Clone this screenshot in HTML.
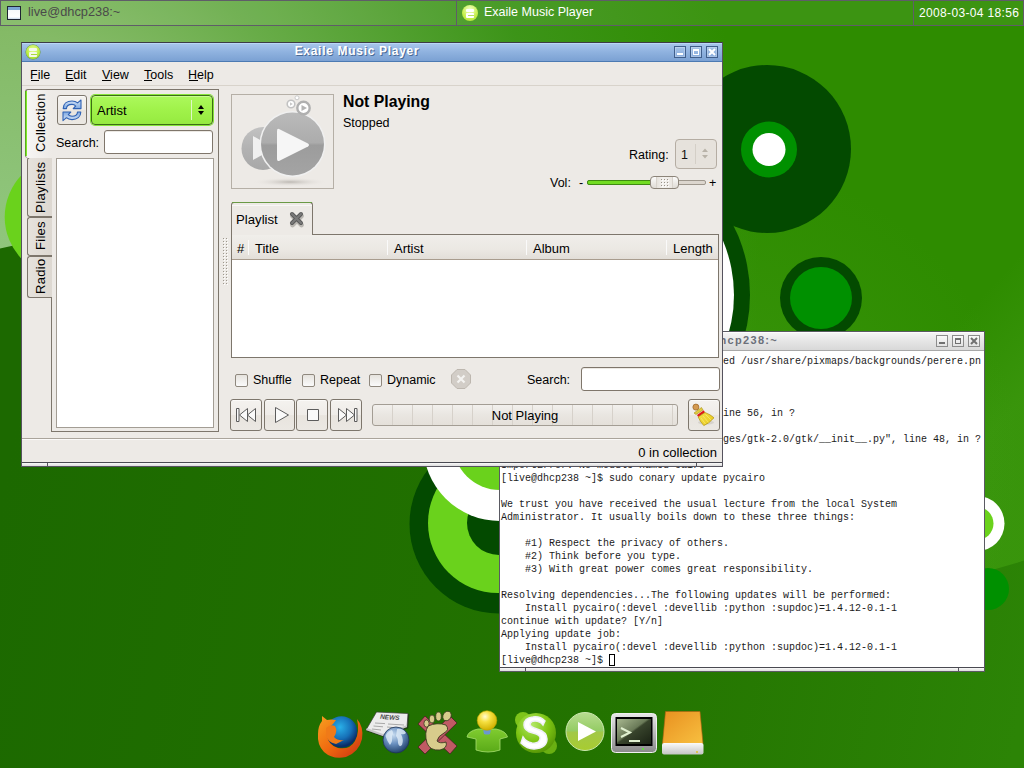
<!DOCTYPE html>
<html><head><meta charset="utf-8">
<style>
*{margin:0;padding:0;box-sizing:border-box}
html,body{width:1024px;height:768px;overflow:hidden;font-family:"Liberation Sans",sans-serif;font-size:13px;color:#000}
.a{position:absolute}
#bg{position:absolute;left:0;top:0}
.t{font-size:12.5px;line-height:14px;white-space:nowrap}
.vt{background:linear-gradient(90deg,#e6e2dc,#ddd8d1);border:1px solid #7d766c;border-right:none;border-radius:3px 0 0 3px}
.vtxt{font-size:12.5px;line-height:14px;white-space:nowrap;transform:rotate(-90deg);transform-origin:0 0}
.btn{border:1px solid #7d766c;border-radius:3px;background:linear-gradient(#f4f2ef,#efece8 50%,#e8e4de 52%,#ebe8e3);box-shadow:inset 0 1px 0 #fbfaf8}
.entry{background:#fff;border:1px solid #7f766b;border-radius:3px;box-shadow:inset 0 1px 0 #ece9e4}
.sep{top:240px;width:1px;height:15px;background:#c8c2b9;border-right:1px solid #fafafa}
.cb{width:13px;height:13px;border:1px solid #8f887e;border-radius:2px;background:linear-gradient(#e6e3de,#fafafa)}
.term{font-family:"Liberation Mono",monospace;font-size:10px;line-height:13px;color:#1a1a1a}
.ttb{width:12px;height:12px;border:1px solid #8c8c8c;background:linear-gradient(#fafafa,#e2e2e2)}
.tb{width:12px;height:12px;border:1px solid #405f8c;background:linear-gradient(#a4c2e8,#88acdc);box-shadow:inset 0 0 0 1px rgba(255,255,255,0.25)}

</style></head><body>
<svg id="bg" width="1024" height="768" viewBox="0 0 1024 768">
<defs>
<radialGradient id="g1" gradientUnits="userSpaceOnUse" cx="0" cy="260" r="760">
<stop offset="0" stop-color="#90c67c"/>
<stop offset="0.08" stop-color="#8ec47a"/>
<stop offset="0.3" stop-color="#84ba66"/>
<stop offset="0.45" stop-color="#68ac48"/>
<stop offset="0.74" stop-color="#3c9418"/>
<stop offset="1" stop-color="#2e8c00"/>
</radialGradient>
<linearGradient id="g2" gradientUnits="userSpaceOnUse" x1="0" y1="500" x2="1024" y2="700">
<stop offset="0" stop-color="#1c6900"/>
<stop offset="0.6" stop-color="#237300"/>
<stop offset="1" stop-color="#2c8406"/>
</linearGradient>
<linearGradient id="band" gradientUnits="userSpaceOnUse" x1="812" y1="475" x2="885" y2="544">
<stop offset="0" stop-color="#5ab030" stop-opacity="0"/>
<stop offset="1" stop-color="#5ab030" stop-opacity="0.24"/>
</linearGradient>
<radialGradient id="glow" cx="0.5" cy="0.5" r="0.5">
<stop offset="0" stop-color="#5ab030" stop-opacity="0.25"/>
<stop offset="0.6" stop-color="#5ab030" stop-opacity="0.1"/>
<stop offset="1" stop-color="#5ab030" stop-opacity="0"/>
</radialGradient>
</defs>
<rect width="1024" height="768" fill="url(#g1)"/>
<path d="M1024 150 L1024 561 Q900 600 700 680 L500 700Z" fill="url(#band)"/>
<circle cx="720" cy="460" r="300" fill="url(#glow)"/>
<path d="M0 248.5 Q150 215 400 250 Q760 320 930 578 Q980 576 1024 560.5 L1024 768 L0 768Z" fill="url(#g2)"/>
<!-- left bright circle -->
<circle cx="65" cy="217" r="60.3" fill="#6ad21c"/>
<!-- big white ring circle behind exaile -->
<circle cx="595" cy="295" r="155" fill="#034a00"/>
<circle cx="595" cy="295" r="139" fill="#fff"/>
<!-- big dark circle top right -->
<circle cx="767" cy="149" r="84" fill="#034a00"/>
<circle cx="769" cy="149.5" r="28" fill="#009000"/>
<circle cx="769" cy="149.5" r="16.5" fill="#fff"/>
<!-- circle 2 -->
<circle cx="821" cy="298" r="41" fill="#034a00"/>
<circle cx="821" cy="298" r="31" fill="#009000"/>
<!-- lower concentric -->
<circle cx="499" cy="524" r="89.5" fill="#034a00"/>
<circle cx="498" cy="523" r="70" fill="#6ad21c"/>
<circle cx="499" cy="523" r="32" fill="#034a00"/>
<circle cx="500" cy="444" r="77" fill="#fff"/>
<circle cx="500" cy="443" r="47" fill="#6ad21c"/>
<!-- right ring -->
<circle cx="977" cy="523.5" r="27.5" fill="#fff"/>
<circle cx="977" cy="523.5" r="16.5" fill="#6ad21c"/>
<circle cx="988" cy="589" r="21" fill="#009000"/>
</svg>

<!-- top panel -->
<div class="a" style="left:0;top:0;width:1024px;height:26px;background:rgba(255,255,255,0.07);border:1px solid #5f5d68"></div>
<div class="a" style="left:456px;top:0;width:1px;height:26px;background:#5f5d68"></div>
<div class="a" style="left:913px;top:0;width:1px;height:26px;background:#5f5d68"></div>
<div class="a" style="left:7px;top:6px;width:14px;height:14px;border:1px solid #1e2432;background:linear-gradient(#7aa6d4 0,#7aa6d4 3px,#f6f8fa 3px,#fff 10px,#c8d8ea 12px)"></div>
<div class="a" style="left:28px;top:5px;font-size:12.8px;line-height:14px;color:#4a4a4a;white-space:nowrap">live@dhcp238:~</div>
<div class="a" style="left:462px;top:5px;width:16px;height:16px;border-radius:50%;background:radial-gradient(circle at 50% 30%,#f4ffd0,#c8f050 55%,#a8dc30)"></div>
<div class="a" style="left:466px;top:9px;width:8px;height:3px;background:#fff;border-radius:1px"></div>
<div class="a" style="left:466px;top:13px;width:8px;height:5px;background:#fff;border-radius:1px"></div>
<div class="a" style="left:468px;top:15px;width:6px;height:1px;background:#b8e060"></div>
<div class="a" style="left:484px;top:5px;font-size:12.5px;line-height:14px;color:#fff;white-space:nowrap">Exaile Music Player</div>
<div class="a" style="left:919px;top:6px;font-size:12px;line-height:14px;color:#fff;white-space:nowrap;letter-spacing:0.35px">2008-03-04 18:56</div>

<!-- terminal window -->
<div class="a" style="left:499px;top:331px;width:486px;height:341px;background:#fff;border:1px solid #5a5a62"></div>
<div class="a" style="left:500px;top:332px;width:484px;height:18px;background:linear-gradient(#f6f6f6,#e6e6e6 50%,#d8d8d8)"></div>
<div class="a" style="left:500px;top:350px;width:484px;height:1px;background:#a8a8a8"></div>
<div class="a" style="left:500px;top:332px;width:484px;height:1px;background:#fdfdfd"></div>
<div class="a" style="left:676px;top:333px;font-weight:bold;font-size:11px;letter-spacing:1.3px;line-height:14px;color:#6c707a;white-space:nowrap">live@dhcp238:~</div>
<div class="a ttb" style="left:936px;top:335px"><div style="position:absolute;left:2px;top:6px;width:6px;height:2px;background:#707070"></div></div>
<div class="a ttb" style="left:952px;top:335px"><div style="position:absolute;left:2px;top:2px;width:6px;height:6px;border:1px solid #707070;border-top-width:2px"></div></div>
<div class="a ttb" style="left:968px;top:335px"><svg width="10" height="10" style="position:absolute;left:0;top:0"><path d="M2 2L8 8M8 2L2 8" stroke="#707070" stroke-width="2"/></svg></div>
<pre class="a term" style="left:501px;top:355px">                                     ed /usr/share/pixmaps/backgrounds/perere.pn
g

Traceback (most recent call last):
  File "/usr/lib/exaile/exaile.py", line 56, in ?
    import gtk, gobject
  File "/usr/lib/python2.4/site-packages/gtk-2.0/gtk/__init__.py", line 48, in ?
    from gtk import _gtk
ImportError: No module named cairo
[live@dhcp238 ~]$ sudo conary update pycairo

We trust you have received the usual lecture from the local System
Administrator. It usually boils down to these three things:

    #1) Respect the privacy of others.
    #2) Think before you type.
    #3) With great power comes great responsibility.

Resolving dependencies...The following updates will be performed:
    Install pycairo(:devel :devellib :python :supdoc)=1.4.12-0.1-1
continue with update? [Y/n]
Applying update job:
    Install pycairo(:devel :devellib :python :supdoc)=1.4.12-0.1-1
[live@dhcp238 ~]$ <span style="display:inline-block;width:6px;height:12px;border:1px solid #000;vertical-align:-3px"></span></pre>
<div class="a" style="left:500px;top:667px;width:484px;height:1px;background:#4a4a52"></div>
<div class="a" style="left:500px;top:668px;width:484px;height:3px;background:linear-gradient(#fafafa,#dcdcdc)"></div>
<div class="a" style="left:525px;top:668px;width:1px;height:3px;background:#55555c"></div>
<div class="a" style="left:958px;top:668px;width:1px;height:3px;background:#55555c"></div>

<!-- exaile window -->
<div class="a" style="left:21px;top:42px;width:702px;height:425px;background:#edeae6;border:1px solid #55535e;border-top-color:#3c3c46"></div>
<!-- title bar -->
<div class="a" style="left:22px;top:43px;width:700px;height:18px;background:linear-gradient(#a9c7ec,#8fb2df 50%,#7ba1d3)"></div>
<div class="a" style="left:22px;top:43px;width:700px;height:1px;background:#b9d6f6"></div>
<div class="a" style="left:22px;top:61px;width:700px;height:1px;background:#4c7ab2"></div>
<div class="a t" style="left:22px;top:44px;width:670px;text-align:center;font-weight:bold;font-size:12px;letter-spacing:0.7px;line-height:15px;color:#fff;text-shadow:1px 1px 0 #4a6a96">Exaile Music Player</div>


<!-- title icon -->
<div class="a" style="left:26px;top:45px;width:14px;height:14px;border-radius:50%;background:radial-gradient(circle at 50% 35%,#e8ff9a,#b8ec3a 60%,#8cc820);box-shadow:0 0 0 0.5px #6a9a20"></div>
<div class="a" style="left:29px;top:48px;width:8px;height:3px;background:#f4f8ea;border-radius:1px"></div>
<div class="a" style="left:29px;top:52px;width:8px;height:5px;background:#f4f8ea;border-radius:1px"></div>
<div class="a" style="left:31px;top:54px;width:6px;height:1px;background:#a8d840"></div>
<!-- title buttons -->
<div class="a tb" style="left:674px;top:46px"><div style="position:absolute;left:2px;top:6px;width:6px;height:2px;background:#fff"></div></div>
<div class="a tb" style="left:690px;top:46px"><div style="position:absolute;left:2px;top:2px;width:6px;height:6px;border:1px solid #fff;border-top-width:2px"></div></div>
<div class="a tb" style="left:706px;top:46px"><svg width="10" height="10" style="position:absolute;left:0;top:0"><path d="M2 2L8 8M8 2L2 8" stroke="#fff" stroke-width="2"/></svg></div>
<!-- menu bar -->
<div class="a" style="left:22px;top:85px;width:700px;height:1px;background:#d8d3cb"></div>
<div class="a t" style="left:30px;top:68px">File</div>
<div class="a t" style="left:65px;top:68px">Edit</div>
<div class="a t" style="left:102px;top:68px">View</div>
<div class="a t" style="left:144px;top:68px">Tools</div>
<div class="a t" style="left:188px;top:68px">Help</div>
<div class="a" style="left:31px;top:80px;width:8px;height:1px;background:#000"></div>
<div class="a" style="left:66px;top:80px;width:8px;height:1px;background:#000"></div>
<div class="a" style="left:102px;top:80px;width:9px;height:1px;background:#000"></div>
<div class="a" style="left:144px;top:80px;width:8px;height:1px;background:#000"></div>
<div class="a" style="left:189px;top:80px;width:9px;height:1px;background:#000"></div>

<!-- left notebook -->
<div class="a" style="left:51px;top:89px;width:168px;height:343px;border:1px solid #7d766c;background:#edeae6"></div>
<!-- inactive tabs -->
<div class="a vt" style="left:27px;top:157px;width:25px;height:60px"></div>
<div class="a vt" style="left:27px;top:217px;width:25px;height:39px"></div>
<div class="a vt" style="left:27px;top:256px;width:25px;height:42px"></div>
<!-- active tab -->
<div class="a" style="left:25px;top:89px;width:27px;height:69px;background:linear-gradient(90deg,#f7f6f4,#edeae6);border:1px solid #7d766c;border-right:none;border-bottom:none;border-radius:3px 0 0 3px"></div>
<div class="a" style="left:25px;top:91px;width:1px;height:65px;background:#58a820"></div><div class="a" style="left:26px;top:91px;width:1px;height:65px;background:#7ee828"></div>
<div class="a vtxt" style="left:33.5px;top:152px;width:70px;font-size:12.9px;letter-spacing:0.2px">Collection</div>
<div class="a vtxt" style="left:33.5px;top:213px;width:60px;font-size:13.2px;letter-spacing:0.35px">Playlists</div>
<div class="a vtxt" style="left:33.5px;top:250px;width:40px;font-size:13.2px;letter-spacing:0.2px">Files</div>
<div class="a vtxt" style="left:33.5px;top:294px;width:42px;font-size:13px;letter-spacing:0.3px">Radio</div>
<!-- refresh button -->
<div class="a btn" style="left:57px;top:95px;width:30px;height:30px"></div>
<svg class="a" style="left:57px;top:95px" width="30" height="30" viewBox="0 0 30 30">
<defs><linearGradient id="rf" x1="0" y1="0" x2="0" y2="1"><stop offset="0" stop-color="#d8e6f8"/><stop offset="1" stop-color="#7ea8e0"/></linearGradient></defs>
<g fill="url(#rf)" stroke="#2f62b4" stroke-width="1.1" stroke-linejoin="round">
<path d="M6.2 13.6 C6.2 8.6 10 6 15 6 C17.6 6 19.4 6.8 20.6 7.9 L24 5 L24 13.6 L16.2 13.6 L18.7 11 C17.8 10 16.6 9.4 15 9.4 C11.5 9.4 9.5 11.2 9.5 13.6 Z"/>
<path d="M6.2 13.6 C6.2 8.6 10 6 15 6 C17.6 6 19.4 6.8 20.6 7.9 L24 5 L24 13.6 L16.2 13.6 L18.7 11 C17.8 10 16.6 9.4 15 9.4 C11.5 9.4 9.5 11.2 9.5 13.6 Z" transform="rotate(180 15 15.3)"/>
</g>
</svg>
<!-- artist combo -->
<div class="a" style="left:91px;top:95px;width:122px;height:30px;border:1px solid #3c6e14;border-radius:4px;background:linear-gradient(#acf85c,#a0f24a 50%,#96ea40);box-shadow:inset 0 1px 0 #c8fc90,0 0 0 1px #86e43a"></div>
<div class="a t" style="left:97px;top:104px;font-size:13px">Artist</div>
<div class="a" style="left:191px;top:100px;width:1px;height:20px;background:#dff8c6"></div>
<svg class="a" style="left:197px;top:104px" width="8" height="12"><path d="M1 5L4 1L7 5Z M1 7L4 11L7 7Z" fill="#000"/></svg>
<!-- search -->
<div class="a t" style="left:56px;top:136px">Search:</div>
<div class="a entry" style="left:104px;top:130px;width:109px;height:24px"></div>
<!-- tree -->
<div class="a" style="left:56px;top:158px;width:158px;height:270px;background:#fff;border:1px solid #a39d94"></div>

<!-- album art -->
<div class="a" style="left:231px;top:94px;width:103px;height:95px;border:1px solid #b5afa6;background:#edeae6"></div>
<svg class="a" style="left:232px;top:95px" width="101" height="93" viewBox="0 0 101 93">
<defs>
<radialGradient id="sh" cx="0.5" cy="0.5" r="0.5"><stop offset="0" stop-color="#bdb9b3"/><stop offset="1" stop-color="#edeae6" stop-opacity="0"/></radialGradient>
<linearGradient id="gb" x1="0" y1="0" x2="0" y2="1"><stop offset="0" stop-color="#bababa"/><stop offset="0.48" stop-color="#acacac"/><stop offset="0.52" stop-color="#9c9c9c"/><stop offset="1" stop-color="#a4a4a4"/></linearGradient>
<linearGradient id="gs" x1="0" y1="0" x2="0" y2="1"><stop offset="0" stop-color="#c2c2c2"/><stop offset="0.5" stop-color="#b2b2b2"/><stop offset="1" stop-color="#a8a8a8"/></linearGradient>
</defs>
<ellipse cx="58" cy="87" rx="38" ry="4.5" fill="url(#sh)"/>
<circle cx="31" cy="53.5" r="21.5" fill="url(#gs)"/>
<path d="M21 41 L21 65 L30 60 L30 46Z" fill="#f0f0f0"/>
<circle cx="60.5" cy="49" r="33" fill="#f0f0f0"/>
<circle cx="60.5" cy="49" r="31.5" fill="url(#gb)"/>
<path d="M47 34 Q45 33 45 36 L45 64 Q45 67 48 65.5 L76 51.5 Q78 50 76 48.5Z" fill="#f6f6f6"/>
<circle cx="71.5" cy="13" r="6.2" fill="#fff" stroke="#b0b0b0" stroke-width="2.4"/>
<path d="M69.5 10 L69.5 16 L75 13Z" fill="#b4b4b4"/>
<circle cx="59" cy="9" r="3.8" fill="#fff" stroke="#c2c2c2" stroke-width="1.6"/>
<path d="M58 7.3 L58 10.7 L60.8 9Z" fill="#c8c8c8"/>
<circle cx="65" cy="2.8" r="2" fill="#fff" stroke="#cacaca" stroke-width="1"/>
</svg>
<div class="a" style="left:343px;top:93px;font-weight:bold;font-size:15.8px;line-height:18px;white-space:nowrap">Not Playing</div>
<div class="a t" style="left:343px;top:116px">Stopped</div>
<!-- rating -->
<div class="a t" style="left:629px;top:148px">Rating:</div>
<div class="a" style="left:675px;top:139px;width:42px;height:30px;border:1px solid #b5ada3;border-radius:4px;background:#e6e2dc"></div>
<div class="a t" style="left:681px;top:148px;color:#111">1</div>
<div class="a" style="left:695px;top:144px;width:1px;height:20px;background:#d4cfc7"></div>
<svg class="a" style="left:701px;top:147px" width="8" height="14"><path d="M1 5L4 1.5L7 5Z M1 8L4 11.5L7 8Z" fill="#b8b2a8"/></svg>
<!-- volume -->
<div class="a t" style="left:550px;top:176px">Vol:</div>
<div class="a t" style="left:579px;top:176px">-</div>
<div class="a t" style="left:709px;top:176px">+</div>
<div class="a" style="left:587px;top:180px;width:119px;height:5px;border:1px solid #9e978d;border-radius:2px;background:#dcd6ce"></div>
<div class="a" style="left:587px;top:180px;width:65px;height:5px;border:1px solid #3f8a12;border-radius:2px 0 0 2px;background:#72dc22"></div>
<div class="a" style="left:650px;top:176px;width:29px;height:13px;border:1px solid #8c8479;border-radius:4px;background:linear-gradient(#fcfcfb,#ebe8e4 60%,#e0dcd6)"></div>
<div class="a" style="left:656px;top:177px;width:17px;height:11px;border-left:1px solid #d8d3cc;border-right:1px solid #d8d3cc;background:linear-gradient(90deg,#e6e2dc,#f4f2ef 40%,#ebe7e2)"></div><svg class="a" style="left:661px;top:179px" width="8" height="8"><rect x="0" y="0" width="1" height="1" fill="#9a938a"/><rect x="1" y="1" width="1" height="1" fill="#fff"/><rect x="3" y="0" width="1" height="1" fill="#9a938a"/><rect x="4" y="1" width="1" height="1" fill="#fff"/><rect x="6" y="0" width="1" height="1" fill="#9a938a"/><rect x="7" y="1" width="1" height="1" fill="#fff"/><rect x="0" y="3" width="1" height="1" fill="#9a938a"/><rect x="1" y="4" width="1" height="1" fill="#fff"/><rect x="3" y="3" width="1" height="1" fill="#9a938a"/><rect x="4" y="4" width="1" height="1" fill="#fff"/><rect x="6" y="3" width="1" height="1" fill="#9a938a"/><rect x="7" y="4" width="1" height="1" fill="#fff"/><rect x="0" y="6" width="1" height="1" fill="#9a938a"/><rect x="1" y="7" width="1" height="1" fill="#fff"/><rect x="3" y="6" width="1" height="1" fill="#9a938a"/><rect x="4" y="7" width="1" height="1" fill="#fff"/><rect x="6" y="6" width="1" height="1" fill="#9a938a"/><rect x="7" y="7" width="1" height="1" fill="#fff"/></svg>

<!-- pane handle -->
<svg class="a" style="left:223px;top:238px" width="6" height="48"><rect x="0" y="0" width="1" height="1" fill="#9d978d"/><rect x="1" y="1" width="1" height="1" fill="#fff"/><rect x="3" y="0" width="1" height="1" fill="#9d978d"/><rect x="4" y="1" width="1" height="1" fill="#fff"/><rect x="0" y="3" width="1" height="1" fill="#9d978d"/><rect x="1" y="4" width="1" height="1" fill="#fff"/><rect x="3" y="3" width="1" height="1" fill="#9d978d"/><rect x="4" y="4" width="1" height="1" fill="#fff"/><rect x="0" y="6" width="1" height="1" fill="#9d978d"/><rect x="1" y="7" width="1" height="1" fill="#fff"/><rect x="3" y="6" width="1" height="1" fill="#9d978d"/><rect x="4" y="7" width="1" height="1" fill="#fff"/><rect x="0" y="9" width="1" height="1" fill="#9d978d"/><rect x="1" y="10" width="1" height="1" fill="#fff"/><rect x="3" y="9" width="1" height="1" fill="#9d978d"/><rect x="4" y="10" width="1" height="1" fill="#fff"/><rect x="0" y="12" width="1" height="1" fill="#9d978d"/><rect x="1" y="13" width="1" height="1" fill="#fff"/><rect x="3" y="12" width="1" height="1" fill="#9d978d"/><rect x="4" y="13" width="1" height="1" fill="#fff"/><rect x="0" y="15" width="1" height="1" fill="#9d978d"/><rect x="1" y="16" width="1" height="1" fill="#fff"/><rect x="3" y="15" width="1" height="1" fill="#9d978d"/><rect x="4" y="16" width="1" height="1" fill="#fff"/><rect x="0" y="18" width="1" height="1" fill="#9d978d"/><rect x="1" y="19" width="1" height="1" fill="#fff"/><rect x="3" y="18" width="1" height="1" fill="#9d978d"/><rect x="4" y="19" width="1" height="1" fill="#fff"/><rect x="0" y="21" width="1" height="1" fill="#9d978d"/><rect x="1" y="22" width="1" height="1" fill="#fff"/><rect x="3" y="21" width="1" height="1" fill="#9d978d"/><rect x="4" y="22" width="1" height="1" fill="#fff"/><rect x="0" y="24" width="1" height="1" fill="#9d978d"/><rect x="1" y="25" width="1" height="1" fill="#fff"/><rect x="3" y="24" width="1" height="1" fill="#9d978d"/><rect x="4" y="25" width="1" height="1" fill="#fff"/><rect x="0" y="27" width="1" height="1" fill="#9d978d"/><rect x="1" y="28" width="1" height="1" fill="#fff"/><rect x="3" y="27" width="1" height="1" fill="#9d978d"/><rect x="4" y="28" width="1" height="1" fill="#fff"/><rect x="0" y="30" width="1" height="1" fill="#9d978d"/><rect x="1" y="31" width="1" height="1" fill="#fff"/><rect x="3" y="30" width="1" height="1" fill="#9d978d"/><rect x="4" y="31" width="1" height="1" fill="#fff"/><rect x="0" y="33" width="1" height="1" fill="#9d978d"/><rect x="1" y="34" width="1" height="1" fill="#fff"/><rect x="3" y="33" width="1" height="1" fill="#9d978d"/><rect x="4" y="34" width="1" height="1" fill="#fff"/><rect x="0" y="36" width="1" height="1" fill="#9d978d"/><rect x="1" y="37" width="1" height="1" fill="#fff"/><rect x="3" y="36" width="1" height="1" fill="#9d978d"/><rect x="4" y="37" width="1" height="1" fill="#fff"/><rect x="0" y="39" width="1" height="1" fill="#9d978d"/><rect x="1" y="40" width="1" height="1" fill="#fff"/><rect x="3" y="39" width="1" height="1" fill="#9d978d"/><rect x="4" y="40" width="1" height="1" fill="#fff"/><rect x="0" y="42" width="1" height="1" fill="#9d978d"/><rect x="1" y="43" width="1" height="1" fill="#fff"/><rect x="3" y="42" width="1" height="1" fill="#9d978d"/><rect x="4" y="43" width="1" height="1" fill="#fff"/><rect x="0" y="45" width="1" height="1" fill="#9d978d"/><rect x="1" y="46" width="1" height="1" fill="#fff"/><rect x="3" y="45" width="1" height="1" fill="#9d978d"/><rect x="4" y="46" width="1" height="1" fill="#fff"/></svg>
<!-- playlist notebook -->
<div class="a" style="left:231px;top:234px;width:488px;height:124px;border:1px solid #7d766c"></div>
<div class="a" style="left:231px;top:202px;width:82px;height:33px;border:1px solid #7d766c;border-bottom:none;border-radius:3px 3px 0 0;background:#edeae6"></div>
<div class="a" style="left:232px;top:202px;width:80px;height:1px;background:#6a9a46"></div>
<div class="a" style="left:232px;top:205px;width:80px;height:1px;background:#f8f7f5"></div>
<div class="a t" style="left:236px;top:213px;font-size:13.2px">Playlist</div>
<svg class="a" style="left:288px;top:210px" width="18" height="18" viewBox="0 0 18 18">
<path d="M4 5L13 14M13 5L4 14" stroke="#b9b6b1" stroke-width="4.6" stroke-linecap="round" transform="translate(0.5,1)"/>
<path d="M4 4L13 13M13 4L4 13" stroke="#5a5a5a" stroke-width="4" stroke-linecap="round"/>
<path d="M4 4L13 13M13 4L4 13" stroke="#7a7a7a" stroke-width="2" stroke-linecap="round"/>
</svg>
<!-- column headers -->
<div class="a" style="left:232px;top:235px;width:486px;height:24px;background:linear-gradient(#f0eeea,#ebe8e3 60%,#e2ded8)"></div>
<div class="a" style="left:232px;top:259px;width:486px;height:1px;background:#a89c8e"></div>
<div class="a sep" style="left:248px"></div>
<div class="a sep" style="left:387px"></div>
<div class="a sep" style="left:526px"></div>
<div class="a sep" style="left:666px"></div>
<div class="a t" style="left:237px;top:242px;font-size:13px">#</div>
<div class="a t" style="left:255px;top:242px;font-size:13px">Title</div>
<div class="a t" style="left:394px;top:242px;font-size:13px">Artist</div>
<div class="a t" style="left:533px;top:242px;font-size:13px">Album</div>
<div class="a t" style="left:673px;top:242px;font-size:13px">Length</div>
<div class="a" style="left:232px;top:260px;width:486px;height:97px;background:#fff"></div>
<!-- checkboxes -->
<div class="a cb" style="left:235px;top:374px"></div>
<div class="a t" style="left:253px;top:373px">Shuffle</div>
<div class="a cb" style="left:302px;top:374px"></div>
<div class="a t" style="left:320px;top:373px">Repeat</div>
<div class="a cb" style="left:369px;top:374px"></div>
<div class="a t" style="left:387px;top:373px">Dynamic</div>
<svg class="a" style="left:450px;top:368px" width="22" height="22" viewBox="0 0 22 22">
<path d="M7 1.5H15L20.5 7V15L15 20.5H7L1.5 15V7Z" fill="#d2cdc7" stroke="#bdb7af" stroke-width="1"/>
<path d="M7.5 7.5L14.5 14.5M14.5 7.5L7.5 14.5" stroke="#f4f3f1" stroke-width="2.2"/>
</svg>
<div class="a t" style="left:527px;top:373px">Search:</div>
<div class="a entry" style="left:581px;top:367px;width:139px;height:24px"></div>
<!-- transport buttons -->
<div class="a btn" style="left:230px;top:399px;width:32px;height:32px"></div>
<div class="a btn" style="left:264px;top:399px;width:31px;height:32px"></div>
<div class="a btn" style="left:296px;top:399px;width:32px;height:32px"></div>
<div class="a btn" style="left:330px;top:399px;width:32px;height:32px"></div>
<svg class="a" style="left:230px;top:399px" width="132" height="32" viewBox="0 0 132 32">
<g fill="#fafafa" stroke="#5c5c5c" stroke-width="1" stroke-linejoin="round">
<rect x="6.5" y="9.5" width="2.5" height="13"/>
<path d="M17.5 9.5L9.5 16L17.5 22.5Z"/>
<path d="M25.5 9.5L17.5 16L25.5 22.5Z"/>
<path d="M45.5 8.5L45.5 23.5L58.5 16Z"/>
<rect x="77.5" y="10.5" width="11" height="11"/>
<path d="M108.5 9.5L116.5 16L108.5 22.5Z"/>
<path d="M116.5 9.5L124.5 16L116.5 22.5Z"/>
<rect x="124.5" y="9.5" width="2.5" height="13"/>
</g>
</svg>
<!-- progress -->
<div class="a" style="left:372px;top:404px;width:306px;height:22px;border:1px solid #a39d94;border-radius:3px;background:linear-gradient(#f2f0ed,#e9e6e1 50%,#e4e0da)"></div>
<div class="a" style="left:373px;top:405px;width:304px;height:20px;background-image:linear-gradient(90deg,transparent 19px,#d6d1ca 19px,#d6d1ca 20px);background-size:20px 20px;background-position:0 0"></div>
<div class="a t" style="left:373px;top:409px;width:304px;text-align:center;font-size:13px">Not Playing</div>
<!-- broom -->
<div class="a btn" style="left:688px;top:399px;width:32px;height:32px"></div>
<svg class="a" style="left:686px;top:397px" width="36" height="36" viewBox="0 0 36 36">
<defs><linearGradient id="brs" x1="0" y1="0" x2="1" y2="1"><stop offset="0" stop-color="#f4e04a"/><stop offset="1" stop-color="#e8c818"/></linearGradient></defs>
<ellipse cx="20" cy="25.5" rx="8" ry="2.2" fill="#c8c4be" opacity="0.6"/>
<circle cx="9.9" cy="10.1" r="3" fill="#d49a50" stroke="#a06a28" stroke-width="0.8"/>
<path d="M8 16 L15.5 10.5 L17 13 L10 17.5Z" fill="#e0cc40" stroke="#a89018" stroke-width="0.6"/>
<path d="M11 18 L17.8 13.2 L19 15.5 L12.2 20Z" fill="#e01818"/>
<path d="M12.2 20 L19 15.5 Q24.5 17.5 28 20.8 Q23 26.5 17.8 28.6 Q14 24.5 12.2 20Z" fill="url(#brs)" stroke="#b09010" stroke-width="0.7"/>
<path d="M15 21 L19.5 27 M17 19 L22.5 25.5 M19.5 17.5 L25 23" stroke="#fff6a0" stroke-width="0.6" opacity="0.8"/>
</svg>
<!-- statusbar -->
<div class="a" style="left:22px;top:438px;width:700px;height:1px;background:#aaa49b"></div>
<div class="a" style="left:22px;top:439px;width:700px;height:1px;background:#fbfaf9"></div>
<div class="a t" style="left:600px;top:446px;width:117px;text-align:right;font-size:13px">0 in collection</div>
<div class="a" style="left:22px;top:462px;width:700px;height:1px;background:#4a4a52"></div>
<div class="a" style="left:22px;top:463px;width:700px;height:3px;background:linear-gradient(#fafafa,#dcdcdc)"></div>
<div class="a" style="left:47px;top:463px;width:1px;height:3px;background:#55555c"></div>
<div class="a" style="left:696px;top:463px;width:1px;height:3px;background:#55555c"></div>

<!-- dock -->
<svg class="a" style="left:300px;top:700px" width="420" height="68" viewBox="300 700 420 68">
<defs>
<radialGradient id="ffg" cx="0.45" cy="0.35" r="0.6"><stop offset="0" stop-color="#2ab0e8"/><stop offset="0.6" stop-color="#1670b8"/><stop offset="1" stop-color="#0a2e68"/></radialGradient>
<linearGradient id="ffo" x1="0" y1="0" x2="1" y2="1"><stop offset="0" stop-color="#f8a020"/><stop offset="0.5" stop-color="#f06a10"/><stop offset="1" stop-color="#c83010"/></linearGradient>
<radialGradient id="glb" cx="0.4" cy="0.3" r="0.7"><stop offset="0" stop-color="#c8dcf0"/><stop offset="0.5" stop-color="#6a90c0"/><stop offset="1" stop-color="#24446e"/></radialGradient>
<radialGradient id="yel" cx="0.4" cy="0.3" r="0.7"><stop offset="0" stop-color="#fffbd0"/><stop offset="0.4" stop-color="#f6e040"/><stop offset="1" stop-color="#d0b000"/></radialGradient>
<linearGradient id="shirt" x1="0" y1="0" x2="0" y2="1"><stop offset="0" stop-color="#80cc30"/><stop offset="1" stop-color="#5aaa18"/></linearGradient>
<radialGradient id="sky" cx="0.4" cy="0.3" r="0.7"><stop offset="0" stop-color="#b4e868"/><stop offset="0.6" stop-color="#7cc412"/><stop offset="1" stop-color="#5a9a08"/></radialGradient>
<linearGradient id="exg" x1="0" y1="0" x2="0" y2="1"><stop offset="0" stop-color="#b8dc90"/><stop offset="0.48" stop-color="#94cc64"/><stop offset="0.52" stop-color="#a2c848"/><stop offset="1" stop-color="#a8cc30"/></linearGradient>
<linearGradient id="mon" x1="0" y1="0" x2="0" y2="1"><stop offset="0" stop-color="#e8e8e8"/><stop offset="1" stop-color="#8a8a8a"/></linearGradient>
<linearGradient id="scr" x1="0" y1="0" x2="1" y2="1"><stop offset="0" stop-color="#a8b890"/><stop offset="0.45" stop-color="#6a7a58"/><stop offset="0.5" stop-color="#38442c"/><stop offset="1" stop-color="#1a2214"/></linearGradient>
<linearGradient id="drv" x1="0" y1="0" x2="1" y2="1"><stop offset="0" stop-color="#e89020"/><stop offset="1" stop-color="#f8c040"/></linearGradient>
<linearGradient id="drb" x1="0" y1="0" x2="0" y2="1"><stop offset="0" stop-color="#fafafa"/><stop offset="1" stop-color="#c4c4c4"/></linearGradient>
</defs>
<!-- firefox -->
<circle cx="341.5" cy="732" r="15.8" fill="url(#ffg)"/>
<path d="M357 719 Q364 727 362 739 Q359 752 346 757 Q333 760 324 752 Q317 745 318 734 Q318 726 322 721 L322 716 L327 720 Q331 719 336 720 L333 724 Q327 728 327 735 Q328 745 338 748 Q350 750 355 741 Q360 732 357 719Z" fill="url(#ffo)"/>
<path d="M326 728 Q330 724 335 726 Q338 731 334 737 Q338 741 344 740 L336 744 Q327 742 326 735Z" fill="#f07a18"/>
<!-- news -->
<path d="M366 730.5 L376 712 L408.5 713.5 L407.5 727.5 L383.5 736.5Z" fill="#1a1a1a" opacity="0.5" transform="translate(0.8,0.8)"/>
<path d="M366 730 L376.5 712 L408 713.5 L407 727 L383 736Z" fill="#ececec" stroke="#3a3a3a" stroke-width="0.7"/>
<path d="M366 730 L383 736 L407 727 L407 725 L383 734 L367 728Z" fill="#c8c8c8"/>
<text x="380" y="719.5" font-family="Liberation Sans" font-weight="bold" font-style="italic" font-size="6.5" fill="#4a4a4a" transform="rotate(4 390 718)">NEWS</text>
<path d="M375 723 L385 723.6 M373.5 726 L383 726.8 M372 729 L381 730 M388 724 L404 725 M387 727 L398 728" stroke="#a0a0a0" stroke-width="0.9"/>
<circle cx="396" cy="740" r="13" fill="url(#glb)" stroke="#1e3454" stroke-width="0.8"/>
<path d="M385.5 736 Q387 731 392 730 Q394 733 392 736 Q393 741 390 745 Q387 741 385.5 736Z M397 729 Q403 728 406 733 Q404 735 401 734 Q404 740 402 745 Q399 748 398 743 Q398 738 396 736Z" fill="#e0ecf8" opacity="0.8"/>
<!-- gimp -->
<path d="M418 724 L425 716 L457 746 L450 754Z" fill="#c05a64" stroke="#4a2024" stroke-width="0.8"/>
<path d="M418 747 L450 716 L457 723 L425 754Z" fill="#c05a64" stroke="#4a2024" stroke-width="0.8"/>
<path d="M428 726 Q437 722 446 725 Q450 730 444 733 Q438 736 437 741 Q440 744 446 742 Q448 748 440 750 Q430 751 427 743 Q424 733 428 726Z" fill="#d8cc8c" stroke="#3a3a20" stroke-width="0.9"/>
<ellipse cx="426.5" cy="723.5" rx="2.6" ry="3.6" fill="#d8cc8c" stroke="#3a3a20" stroke-width="0.8"/>
<ellipse cx="432" cy="719" rx="2.8" ry="4" fill="#d8cc8c" stroke="#3a3a20" stroke-width="0.8"/>
<ellipse cx="438.5" cy="716.5" rx="2.8" ry="4.4" fill="#d8cc8c" stroke="#3a3a20" stroke-width="0.8"/>
<ellipse cx="447" cy="716" rx="4" ry="5" transform="rotate(30 447 716)" fill="#d8cc8c" stroke="#3a3a20" stroke-width="0.8"/>
<!-- person -->
<path d="M467 737 Q468 731 478 729 L496 729 Q506 731 507.5 737 L500 739 L500 750 Q488 754 476 750 L476 739Z" fill="url(#shirt)" stroke="#a8e070" stroke-width="0.8"/>
<path d="M483 729 L491 729 L490 734 Q487 735 484 734Z" fill="#6a98d0"/>
<circle cx="487" cy="720.5" r="9.8" fill="url(#yel)" stroke="#c0a800" stroke-width="0.6"/>
<!-- skype -->
<circle cx="523" cy="720" r="8" fill="#7ec41a"/>
<circle cx="549" cy="746" r="8" fill="#6ab012"/>
<circle cx="536" cy="733" r="20" fill="url(#sky)"/>
<path d="M545 721 Q540 716 533 717 Q524 718 524 725 Q524 731 533 733 Q541 735 540 739 Q539 744 532 743 Q526 742 523 737 L521 743 Q527 749 534 749 Q547 748 547 739 Q547 732 537 729 Q530 727 530 724 Q531 721 535 721 Q540 721 543 725Z" fill="#fff" stroke="#f0f0f8" stroke-width="1.5"/>
<!-- exaile -->
<circle cx="585" cy="731.5" r="19" fill="url(#exg)" stroke="#cce8b0" stroke-width="1"/>
<path d="M578 722 L578 741 L596 731.5Z" fill="#fff"/>
<!-- terminal -->
<rect x="611.5" y="713.5" width="45" height="39" rx="4" fill="url(#mon)" stroke="#f0f0f0" stroke-width="1"/>
<rect x="615.5" y="717" width="37" height="29" fill="#000"/>
<rect x="617" y="719" width="34" height="25" fill="url(#scr)"/>
<path d="M621 728 L630 732.5 L621 737" fill="none" stroke="#e0f0d0" stroke-width="2"/>
<rect x="629" y="740" width="11" height="2" fill="#e0f0d0"/>
<rect x="642" y="748" width="2" height="2" fill="#60e040"/>
<!-- drive -->
<path d="M665.5 711.5 L700 711.5 L703 743.5 L662.5 743.5Z" fill="url(#drv)" stroke="#b06010" stroke-width="0.6"/>
<rect x="662" y="743" width="41.5" height="11.5" rx="2" fill="url(#drb)"/>
<circle cx="697" cy="752" r="1" fill="#e0c020"/>
</svg>
</body></html>
